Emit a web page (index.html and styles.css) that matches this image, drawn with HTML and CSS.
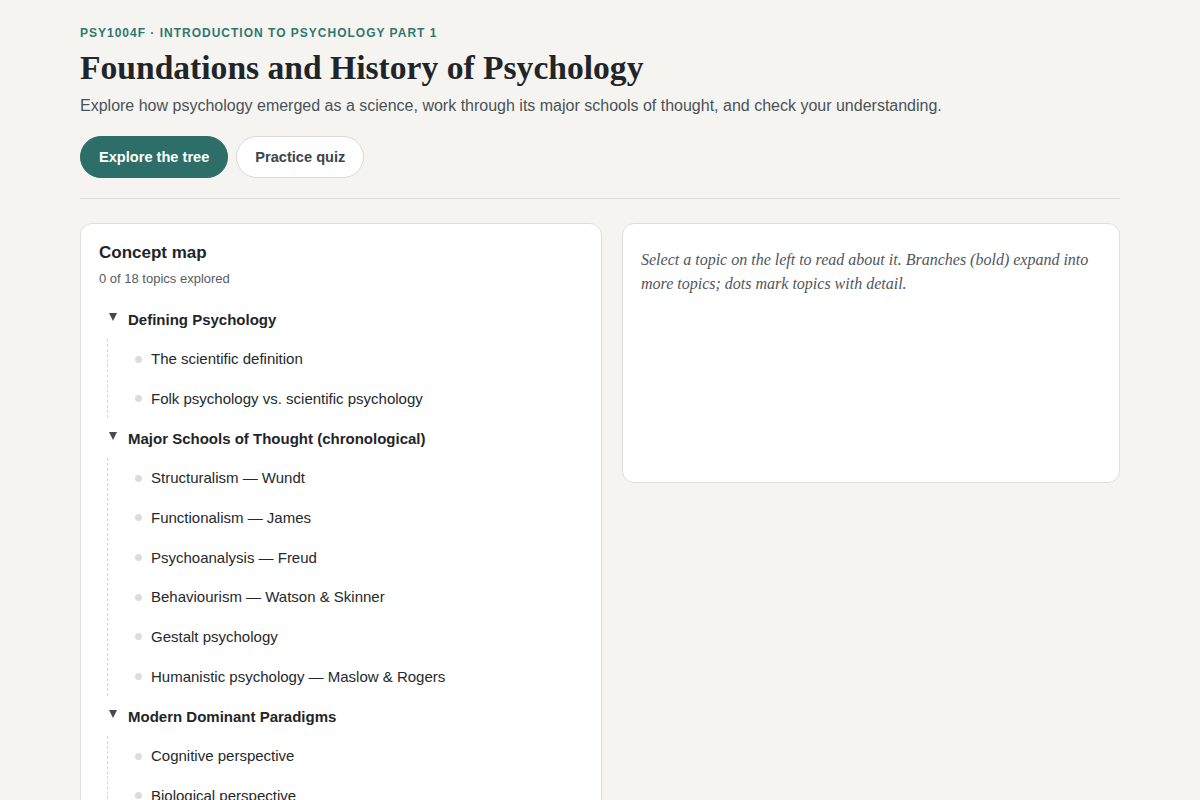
FILE: index.html
```html
<!DOCTYPE html>
<html lang="en">
<head>
  <meta charset="UTF-8">
  <title>Foundations and History of Psychology</title>
  <meta name="viewport" content="width=device-width, initial-scale=1">
  <link rel="stylesheet" href="styles.css">
</head>
<body>

<main class="page">
  <header class="hero">
    <p class="eyebrow">PSY1004F · Introduction to Psychology Part 1</p>
    <h1 class="title">Foundations and History of Psychology</h1>
    <p class="lede">Explore how psychology emerged as a science, work through its major schools of thought, and check your understanding.</p>
    <div class="actions">
      <button class="btn btn-primary">Explore the tree</button>
      <button class="btn btn-ghost">Practice quiz</button>
    </div>
  </header>

  <div class="layout">
    <!-- Tree of topics -->
    <section class="card map">
      <h2 class="card-title">Concept map</h2>
      <p class="progress">0 of 18 topics explored</p>

      <ul class="tree">
        <li class="branch">
          <div class="branch-row"><span class="caret"></span>Defining Psychology</div>
          <ul class="leaves">
            <li class="leaf"><span class="dot"></span>The scientific definition</li>
            <li class="leaf"><span class="dot"></span>Folk psychology vs. scientific psychology</li>
          </ul>
        </li>
        <li class="branch">
          <div class="branch-row"><span class="caret"></span>Major Schools of Thought (chronological)</div>
          <ul class="leaves">
            <li class="leaf"><span class="dot"></span>Structuralism — Wundt</li>
            <li class="leaf"><span class="dot"></span>Functionalism — James</li>
            <li class="leaf"><span class="dot"></span>Psychoanalysis — Freud</li>
            <li class="leaf"><span class="dot"></span>Behaviourism — Watson &amp; Skinner</li>
            <li class="leaf"><span class="dot"></span>Gestalt psychology</li>
            <li class="leaf"><span class="dot"></span>Humanistic psychology — Maslow &amp; Rogers</li>
          </ul>
        </li>
        <li class="branch">
          <div class="branch-row"><span class="caret"></span>Modern Dominant Paradigms</div>
          <ul class="leaves">
            <li class="leaf"><span class="dot"></span>Cognitive perspective</li>
            <li class="leaf"><span class="dot"></span>Biological perspective</li>
            <li class="leaf"><span class="dot"></span>Evolutionary perspective</li>
            <li class="leaf"><span class="dot"></span>Sociocultural perspective</li>
          </ul>
        </li>
      </ul>
    </section>

    <!-- Detail pane -->
    <section class="card detail">
      <p class="hint">Select a topic on the left to read about it. Branches (bold) expand into more topics; dots mark topics with detail.</p>
    </section>
  </div>
</main>

</body>
</html>
```

FILE: styles.css
```css
/* page basics */
* { box-sizing: border-box; }
html, body { margin: 0; padding: 0; }
body { background: #f5f4f0; color: #1f2529; font-family: "Liberation Sans", Arial, sans-serif; }

.page { max-width: 1040px; margin: 0 auto; padding: 25px 0 40px; }

/* header */
.hero { border-bottom: 1px solid #dddbd6; padding-bottom: 20px; margin-bottom: 24px; }
.eyebrow { margin: 0; font-size: 12px; line-height: 16px; font-weight: bold; letter-spacing: 1px; text-transform: uppercase; color: #2f7870; }
.title { margin: 6px 0 0; font-family: "Liberation Serif", "Times New Roman", serif; font-size: 33.6px; line-height: 42px; font-weight: bold; color: #1f2529; }
.lede { margin: 5px 0 0; font-size: 16px; line-height: 24px; color: #4a5259; }

.actions { display: flex; gap: 8px; margin-top: 18px; }
.btn { height: 42px; padding: 0 18px; border-radius: 21px; font-family: "Liberation Sans", Arial, sans-serif; font-size: 14.6px; font-weight: bold; cursor: pointer; }
.btn-primary { background: #2e6e68; color: #fff; border: 1px solid #2e6e68; }
.btn-ghost { background: #fff; color: #3d454c; border: 1px solid #dcdad5; }

/* two panes */
.layout { display: grid; grid-template-columns: 522px 1fr; gap: 20px; align-items: start; }
.card { background: #fff; border: 1px solid #e0deda; border-radius: 12px; padding: 18px; }

.card-title { margin: 0; font-size: 17px; line-height: 22px; font-weight: bold; color: #1f2529; }
.progress { margin: 6px 0 0; font-size: 13px; line-height: 18px; color: #555c62; }

/* tree */
.tree { list-style: none; margin: 11px 0 0; padding: 0; }
.branch-row { display: flex; align-items: center; padding: 10px 0 8px 10px; font-size: 15px; line-height: 21.7px; font-weight: bold; color: #1f2529; }
.caret { width: 0; height: 0; margin-right: 11px; border-left: 4.5px solid transparent; border-right: 4.5px solid transparent; border-top: 8px solid #454a4e; position: relative; top: -3px; }
.leaves { list-style: none; margin: 0 0 0 8px; padding: 0 0 0 27px; border-left: 1px dashed #d6d6d6; }
.leaf { display: flex; align-items: center; padding: 9.5px 0 8.5px; font-size: 15px; line-height: 21.7px; color: #24292d; }
.dot { width: 7px; height: 7px; border-radius: 50%; background: #dcdcdc; margin-right: 9px; flex-shrink: 0; }

/* detail pane */
.detail { min-height: 260px; }
.hint { margin: 6px 0 0; font-family: "Liberation Serif", "Times New Roman", serif; font-style: italic; font-size: 16px; line-height: 24px; color: #4f565c; }
```
